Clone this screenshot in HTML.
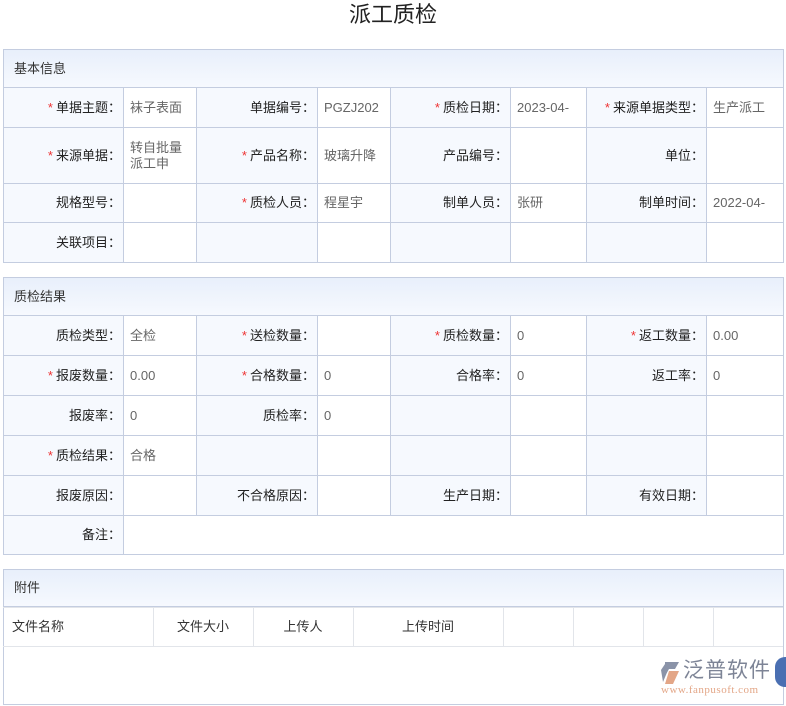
<!DOCTYPE html><html><head><meta charset="utf-8"><style>
body{margin:0;width:786px;height:706px;background:#fff;font-family:"Liberation Sans","Noto Sans CJK SC",sans-serif;font-size:13px;color:#333;position:relative;overflow:hidden}
h1{position:absolute;top:0;left:0;width:786px;margin:0;text-align:center;font-weight:normal;font-size:22px;line-height:30px;color:#222}
.p{position:absolute;left:3px;width:779px;border:1px solid #c4cde0}
.hd{height:37px;line-height:37px;padding-left:10px;background:linear-gradient(#e8effb,#f6f9fe);border-bottom:1px solid #c4cde0;color:#333}
table{border-collapse:collapse;table-layout:fixed;width:780px;margin:-1px 0 -1px -1px}
td{border:1px solid #c4cde0;padding:0 6px;vertical-align:middle;line-height:16px}
td.l{background:#f6f9fe;text-align:right;color:#222;padding-right:2px}
td.v{color:#666;background:#fff}
.s{color:#e33;margin-right:3px}
.a td{border-color:#e2e5ea;color:#333}
</style></head><body>
<h1>派工质检</h1>
<div class="p" style="top:49px">
<div class="hd">基本信息</div>
<table><colgroup><col width="120"><col width="73"><col width="121"><col width="73"><col width="120"><col width="76"><col width="120"><col width="77"></colgroup>
<tr style="height:40px"><td class="l"><span class="s">*</span>单据主题：</td><td class="v">袜子表面</td><td class="l">单据编号：</td><td class="v">PGZJ202</td><td class="l"><span class="s">*</span>质检日期：</td><td class="v">2023-04-</td><td class="l"><span class="s">*</span>来源单据类型：</td><td class="v" style="white-space:nowrap;overflow:hidden">生产派工</td></tr>
<tr style="height:56px"><td class="l"><span class="s">*</span>来源单据：</td><td class="v">转自批量派工申</td><td class="l"><span class="s">*</span>产品名称：</td><td class="v">玻璃升降</td><td class="l">产品编号：</td><td class="v"></td><td class="l">单位：</td><td class="v"></td></tr>
<tr style="height:39px"><td class="l">规格型号：</td><td class="v"></td><td class="l"><span class="s">*</span>质检人员：</td><td class="v">程星宇</td><td class="l">制单人员：</td><td class="v">张研</td><td class="l">制单时间：</td><td class="v">2022-04-</td></tr>
<tr style="height:40px"><td class="l">关联项目：</td><td class="v"></td><td class="l"></td><td class="v"></td><td class="l"></td><td class="v"></td><td class="l"></td><td class="v"></td></tr>
</table></div>
<div class="p" style="top:277px">
<div class="hd">质检结果</div>
<table><colgroup><col width="120"><col width="73"><col width="121"><col width="73"><col width="120"><col width="76"><col width="120"><col width="77"></colgroup>
<tr style="height:40px"><td class="l">质检类型：</td><td class="v">全检</td><td class="l"><span class="s">*</span>送检数量：</td><td class="v"></td><td class="l"><span class="s">*</span>质检数量：</td><td class="v">0</td><td class="l"><span class="s">*</span>返工数量：</td><td class="v">0.00</td></tr>
<tr style="height:40px"><td class="l"><span class="s">*</span>报废数量：</td><td class="v">0.00</td><td class="l"><span class="s">*</span>合格数量：</td><td class="v">0</td><td class="l">合格率：</td><td class="v">0</td><td class="l">返工率：</td><td class="v">0</td></tr>
<tr style="height:40px"><td class="l">报废率：</td><td class="v">0</td><td class="l">质检率：</td><td class="v">0</td><td class="l"></td><td class="v"></td><td class="l"></td><td class="v"></td></tr>
<tr style="height:40px"><td class="l"><span class="s">*</span>质检结果：</td><td class="v">合格</td><td class="l"></td><td class="v"></td><td class="l"></td><td class="v"></td><td class="l"></td><td class="v"></td></tr>
<tr style="height:40px"><td class="l">报废原因：</td><td class="v"></td><td class="l">不合格原因：</td><td class="v"></td><td class="l">生产日期：</td><td class="v"></td><td class="l">有效日期：</td><td class="v"></td></tr>
<tr style="height:39px"><td class="l">备注：</td><td class="v" colspan="7"></td></tr>
</table></div>
<div class="p" style="top:569px;height:134px">
<div class="hd" style="height:36px;line-height:36px">附件</div>
<table class="a" style="margin-top:0"><colgroup><col width="150"><col width="100"><col width="100"><col width="150"><col width="70"><col width="70"><col width="70"><col width="70"></colgroup>
<tr style="height:39px"><td style="border-left:none;padding-left:9px">文件名称</td><td style="text-align:center">文件大小</td><td style="text-align:center">上传人</td><td style="text-align:center">上传时间</td><td></td><td></td><td></td><td style="border-right:none"></td></tr>
</table>
<div style="position:absolute;right:6px;top:88px;width:120px;height:40px">
<svg width="26" height="26" viewBox="0 0 26 26" style="position:absolute;left:0;top:2px"><path d="M8 2h14l-4 7H12L8 16z" fill="#8a93a8"/><path d="M4 10l4-6 3 6-5 12z" fill="#8a93a8"/><path d="M12 11h10l-6 13H8z" fill="#e3a687"/></svg>
<div style="position:absolute;left:26px;top:0;font-size:21px;line-height:26px;color:#7d8496;letter-spacing:1px">泛普软件</div>
<div style="position:absolute;left:4px;top:26px;font-family:'Liberation Serif',serif;font-size:11px;color:#e3a687;letter-spacing:.5px">www.fanpusoft.com</div>
</div>
<div style="position:absolute;right:-12px;top:87px;width:20px;height:30px;border-radius:10px 0 0 10px;background:#4a6fb2"></div>
</div>
</body></html>
